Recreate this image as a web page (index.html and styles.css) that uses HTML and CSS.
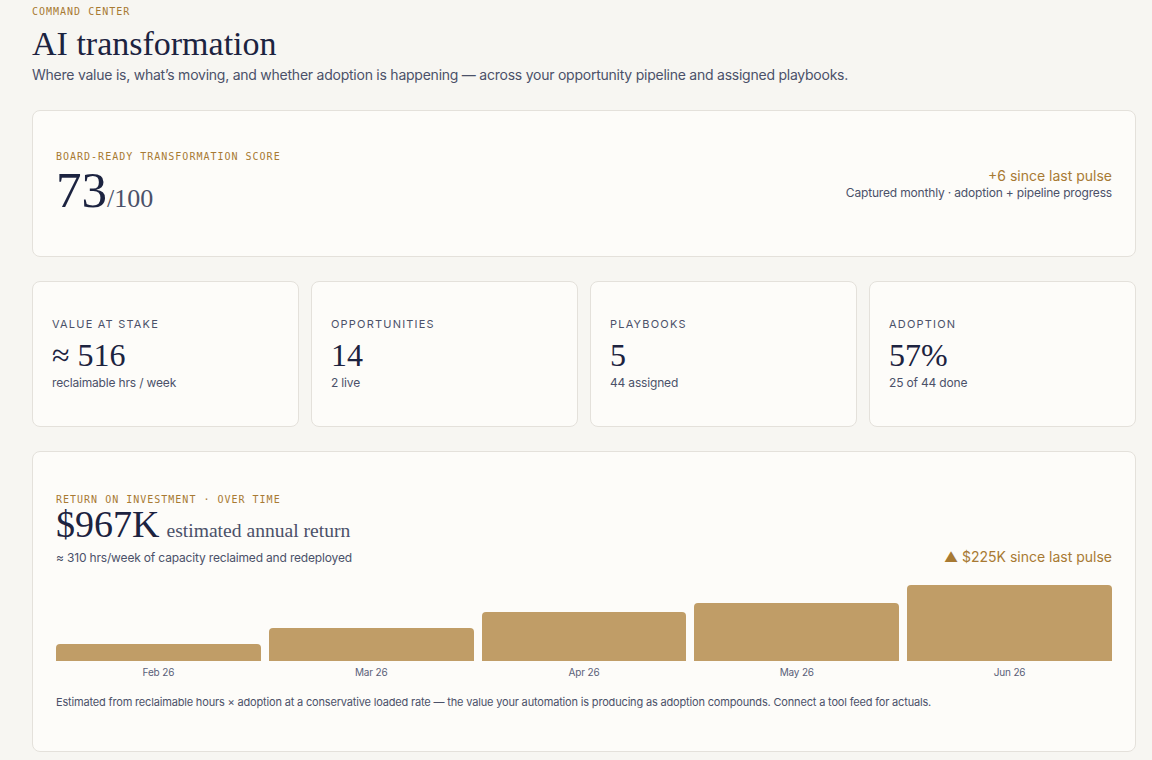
FILE: index.html
```html
<!DOCTYPE html>
<html lang="en">
<head>
  <meta charset="UTF-8" />
  <title>Command Center · AI transformation</title>
  <link rel="stylesheet" href="styles.css">
</head>
<body>

<div class="page">
  <header class="page-head">
    <div class="eyebrow">Command center</div>
    <h1>AI transformation</h1>
    <p class="lede">Where value is, what’s moving, and whether adoption is happening — across your opportunity pipeline and assigned playbooks.</p>
  </header>

  <section class="card score-card">
    <div class="score-main">
      <div class="eyebrow">Board-ready transformation score</div>
      <div class="score"><span class="score-num">73</span><span class="score-of">/100</span></div>
    </div>
    <div class="score-side">
      <div class="delta">+6 since last pulse</div>
      <div class="note">Captured monthly · adoption + pipeline progress</div>
    </div>
  </section>

  <section class="stats">
    <div class="card stat">
      <div class="stat-label">Value at stake</div>
      <div class="stat-value">≈ 516</div>
      <div class="stat-sub">reclaimable hrs / week</div>
    </div>
    <div class="card stat">
      <div class="stat-label">Opportunities</div>
      <div class="stat-value">14</div>
      <div class="stat-sub">2 live</div>
    </div>
    <div class="card stat">
      <div class="stat-label">Playbooks</div>
      <div class="stat-value">5</div>
      <div class="stat-sub">44 assigned</div>
    </div>
    <div class="card stat">
      <div class="stat-label">Adoption</div>
      <div class="stat-value">57%</div>
      <div class="stat-sub">25 of 44 done</div>
    </div>
  </section>

  <section class="card roi-card">
    <div class="roi-head">
      <div>
        <div class="eyebrow">Return on investment · over time</div>
        <div class="roi-total"><span class="roi-num">$967K</span><span class="roi-unit">estimated annual return</span></div>
        <div class="note">≈ 310 hrs/week of capacity reclaimed and redeployed</div>
      </div>
      <div class="delta">▲ $225K since last pulse</div>
    </div>

    <div class="chart">
      <div class="col"><div class="bar-wrap"><div class="bar" style="height: 22%"></div></div><div class="month">Feb 26</div></div>
      <div class="col"><div class="bar-wrap"><div class="bar" style="height: 43%"></div></div><div class="month">Mar 26</div></div>
      <div class="col"><div class="bar-wrap"><div class="bar" style="height: 64%"></div></div><div class="month">Apr 26</div></div>
      <div class="col"><div class="bar-wrap"><div class="bar" style="height: 76%"></div></div><div class="month">May 26</div></div>
      <div class="col"><div class="bar-wrap"><div class="bar" style="height: 100%"></div></div><div class="month">Jun 26</div></div>
    </div>

    <p class="footnote">Estimated from reclaimable hours × adoption at a conservative loaded rate — the value your automation is producing as adoption compounds. Connect a tool feed for actuals.</p>
  </section>
</div>

</body>
</html>
```

FILE: styles.css
```css
body {
  margin: 0;
  background: #f7f6f2;
  color: #1c2340;
  font-family: Inter, 'Noto Sans', sans-serif;
  letter-spacing: -0.17px;
}

.page {
  padding: 6px 16px 24px 32px;
}

.eyebrow {
  font-family: 'DejaVu Sans Mono', 'Liberation Mono', monospace;
  font-size: 10px;
  line-height: 12px;
  letter-spacing: 1px;
  text-transform: uppercase;
  color: #a87a33;
}

h1 {
  margin: 8px 0 3px;
  font-family: 'Liberation Serif', serif;
  font-weight: normal;
  font-size: 34px;
  line-height: 36px;
  letter-spacing: 0;
  color: #1c2340;
}

.lede {
  margin: 0 0 25px;
  font-size: 14px;
  line-height: 20px;
  letter-spacing: -0.24px;
  color: #4b5169;
}

.card {
  background: #fdfcf9;
  border: 1px solid #e4e1db;
  border-radius: 8px;
}

/* score */

.score-card {
  display: flex;
  justify-content: space-between;
  align-items: center;
  height: 145px;
  padding: 0 23px;
}

.score {
  margin-top: 2px;
  font-family: 'Liberation Serif', serif;
  line-height: 1;
  letter-spacing: 0;
}

.score-num {
  font-size: 51px;
  color: #1c2340;
}

.score-of {
  font-size: 26px;
  color: #4b5169;
}

.score-side {
  text-align: right;
}

.delta {
  font-size: 14px;
  line-height: 18px;
  letter-spacing: 0;
  color: #a87a33;
}

.note {
  font-size: 12px;
  line-height: 16px;
  color: #4b5169;
}

/* stat row */

.stats {
  display: grid;
  grid-template-columns: repeat(4, 1fr);
  gap: 12px;
  margin: 24px 0 24px;
}

.stat {
  height: 144px;
  padding: 0 19px;
  display: flex;
  flex-direction: column;
  justify-content: center;
}

.stat-label {
  font-size: 11px;
  line-height: 14px;
  letter-spacing: 1.2px;
  text-transform: uppercase;
  color: #4b5169;
}

.stat-value {
  margin-top: 6px;
  font-family: 'Liberation Serif', serif;
  font-size: 32px;
  line-height: 36px;
  letter-spacing: 0;
  color: #1c2340;
}

.stat-sub {
  margin-top: 2px;
  font-size: 12px;
  line-height: 16px;
  color: #4b5169;
}

/* roi */

.roi-card {
  padding: 42px 23px 42px;
}

.roi-head {
  display: flex;
  justify-content: space-between;
  align-items: flex-end;
}

.roi-total {
  font-family: 'Liberation Serif', serif;
  line-height: 37px;
  letter-spacing: 0;
}

.roi-num {
  font-size: 38px;
  color: #1c2340;
}

.roi-unit {
  margin-left: 7px;
  font-size: 19.6px;
  color: #4b5169;
}

.chart {
  display: flex;
  gap: 8px;
  margin-top: 19px;
}

.col {
  flex: 1;
}

.bar-wrap {
  height: 76px;
  display: flex;
  align-items: flex-end;
}

.bar {
  width: 100%;
  background: #c09d67;
  border-radius: 4px 4px 0 0;
}

.month {
  margin-top: 5px;
  text-align: center;
  font-size: 10px;
  line-height: 12px;
  color: #5a6078;
}

.footnote {
  margin: 17px 0 0;
  font-size: 11px;
  line-height: 14px;
  color: #4b5169;
}
```
